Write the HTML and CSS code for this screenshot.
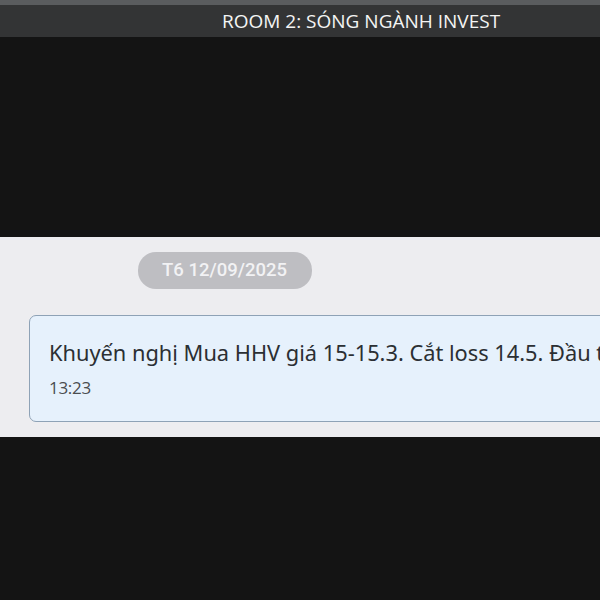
FILE: index.html
```html
<!DOCTYPE html>
<html lang="vi">
<head>
<meta charset="UTF-8" />
<title>Room 2</title>
<link rel="stylesheet" href="styles.css">
</head>
<body>
<header class="topbar">
  <h1 class="room-title">ROOM 2: SÓNG NGÀNH INVEST</h1>
</header>

<div class="blank"></div>

<section class="chat">
  <div class="date-row">
    <span class="date-pill">T6 12/09/2025</span>
  </div>
  <div class="bubble">
    <p class="msg">Khuyến nghị Mua HHV giá 15-15.3. Cắt loss 14.5. Đầu tư</p>
    <span class="time">13:23</span>
  </div>
</section>
</body>
</html>
```

FILE: styles.css
```css
html, body {
  margin: 0;
  padding: 0;
  overflow: hidden;
}
body {
  width: 600px;
  height: 600px;
  background: #141414;
  font-family: "Open Sans", "Noto Sans", sans-serif;
}
.topbar {
  height: 32px;
  border-top: 5px solid #5a5c5e;
  background: #333435;
  display: flex;
  align-items: center;
  padding-left: 222px;
}
.room-title {
  margin: 0;
  font-size: 19px;
  font-weight: 400;
  color: #f4f4f4;
}
.blank {
  height: 200px;
}
.chat {
  height: 200px;
  box-sizing: border-box;
  background: #ededf0;
  padding-top: 15px;
  overflow: hidden;
}
.date-row {
  padding-left: 138px;
}
.date-pill {
  display: inline-block;
  height: 37px;
  line-height: 37px;
  padding: 0 25px 0 24px;
  border-radius: 18px;
  background: #bebec2;
  color: #f2f2f4;
  font-family: Roboto, sans-serif;
  font-size: 18.5px;
  font-weight: 500;
}
.bubble {
  margin: 26px 0 0 29px;
  width: 600px;
  height: 107px;
  box-sizing: border-box;
  border: 1px solid #8ea2b6;
  border-radius: 7px;
  background: #e6f1fc;
  padding: 23px 0 0 19px;
  overflow: hidden;
}
.msg {
  margin: 0;
  white-space: nowrap;
  font-family: "Noto Sans", sans-serif;
  font-size: 21.8px;
  line-height: 28px;
  color: #2b2f33;
}
.time {
  display: block;
  margin-top: 9px;
  font-family: "Open Sans", sans-serif;
  font-size: 17px;
  color: #4a4d50;
  letter-spacing: -0.3px;
}
```
